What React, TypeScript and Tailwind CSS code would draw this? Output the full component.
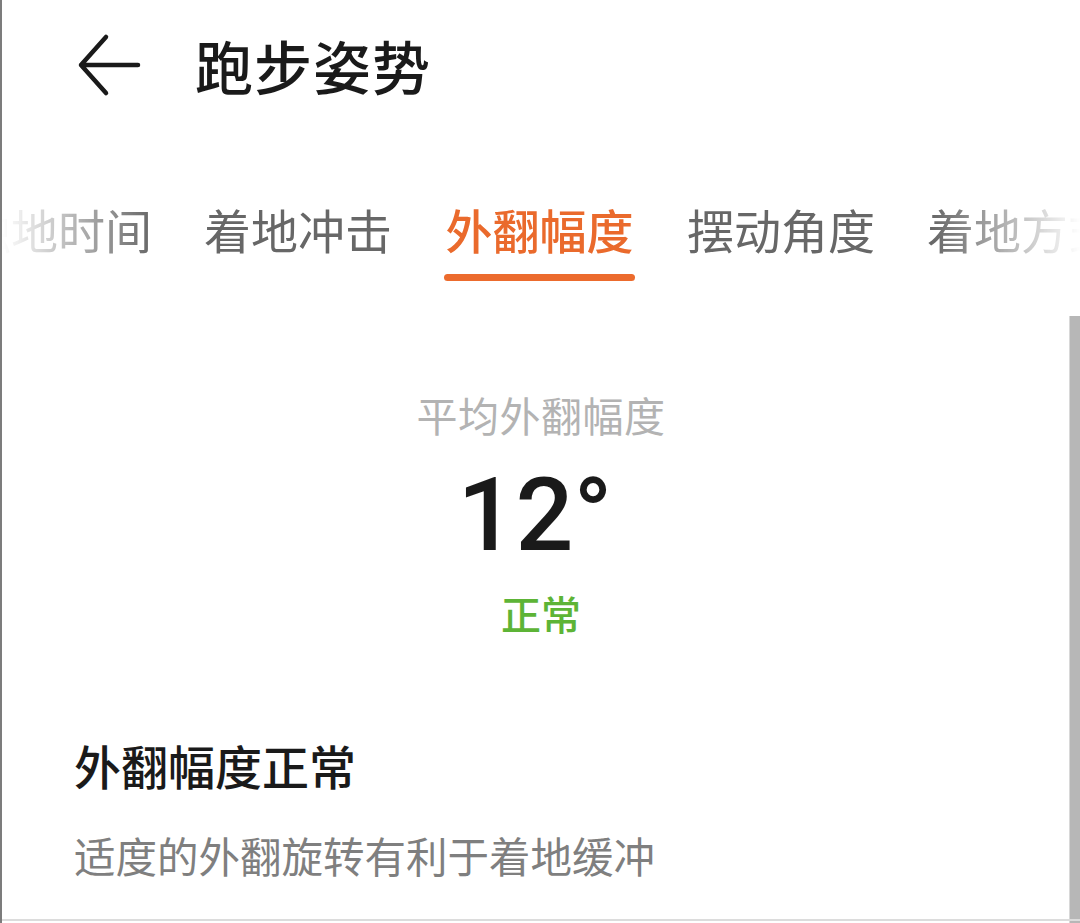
import React from "react";

const cjk = { fontFamily: '"Noto Sans CJK SC", "Noto Sans", sans-serif' };

const tabs = ["触地时间", "着地冲击", "外翻幅度", "摆动角度", "着地方式"];

export default function App() {
  return (
    <div
      className="relative w-[1080px] h-[923px] overflow-hidden bg-white border-l-2 border-[#7c7c7c]"
      style={cjk}
    >
      {/* Header */}
      <div className="flex h-[130px] items-center">
        <div className="ml-[74px] flex h-[64px] w-[68px] items-center">
          <svg width="66" height="64" viewBox="0 0 66 64" fill="none">
            <path
              d="M30 4 L5 32 L30 60 M5 32 L62 32"
              stroke="#1a1a1a"
              strokeWidth="4.5"
              strokeLinecap="round"
              strokeLinejoin="round"
            />
          </svg>
        </div>
        <div className="ml-[51px] text-[58px] leading-[70px] font-medium text-[#1a1a1a] tracking-[1px]">
          跑步姿势
        </div>
      </div>

      {/* Tabs */}
      <div className="mt-[69px] overflow-hidden [mask-image:linear-gradient(to_right,transparent_0px,black_150px,black_930px,transparent_1078px)]">
        <div className="ml-[-38px] flex gap-[52px] whitespace-nowrap">
          {tabs.map((t) => {
            const active = t === "外翻幅度";
            return (
              <div key={t} className="flex flex-col items-center">
                <div
                  className={
                    active
                      ? "text-[47px] leading-[60px] text-[#ea6a2c] font-medium"
                      : "text-[47px] leading-[60px] text-[#676767]"
                  }
                >
                  {t}
                </div>
                <div
                  className={
                    active
                      ? "mt-[15px] h-[7px] w-[191px] rounded-full bg-[#ec6b2d]"
                      : "mt-[15px] h-[7px] w-[188px]"
                  }
                />
              </div>
            );
          })}
        </div>
      </div>

      {/* Summary */}
      <div className="flex flex-col items-center">
        <div className="mt-[105px] text-[41px] leading-[56px] text-[#b3b3b3] tracking-[0.5px]">
          平均外翻幅度
        </div>
        <div
          className="mt-[22px] pr-[12px] text-[102px] leading-[102px] font-medium text-[#1a1a1a]"
          style={{ fontFamily: 'Roboto, "Noto Sans", sans-serif' }}
        >
          12°
        </div>
        <div className="mt-[22px] text-[40px] leading-[50px] font-medium text-[#5db436]">
          正常
        </div>
      </div>

      {/* Detail */}
      <div className="pl-[72px]">
        <div className="mt-[97px] text-[47px] leading-[60px] font-medium text-[#1a1a1a]">
          外翻幅度正常
        </div>
        <div className="mt-[32px] text-[41.5px] leading-[56px] text-[#7f7f7f]">
          适度的外翻旋转有利于着地缓冲
        </div>
      </div>

      {/* Scrollbar */}
      <div className="absolute right-0 top-[316px] bottom-0 w-[11px] border-l border-[#d8d8d8] bg-[#b7b7b7]" />
      {/* Bottom line */}
      <div className="absolute left-0 right-0 bottom-[2px] h-[2px] bg-[#dcdcdc]" />
    </div>
  );
}
